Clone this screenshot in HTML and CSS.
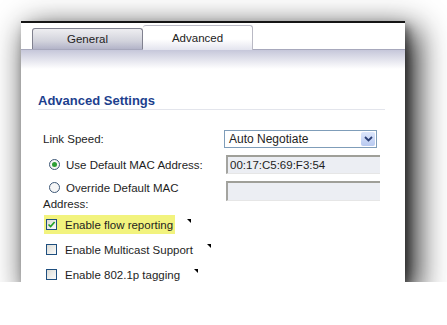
FILE: index.html
```html
<!DOCTYPE html>
<html lang="en">

<head>
    <meta charset="UTF-8">
    <title>Advanced Settings</title>
    <link rel="stylesheet" href="styles.css">
</head>

<body>
    <div class="panel">
        <div class="tabs">
            <div class="tab">General</div>
            <div class="tab active">Advanced</div>
        </div>
        <div class="band"></div>

        <div class="content">
            <h2 class="section-title">Advanced Settings</h2>

            <div class="form-row">
                <div class="cell-label">Link Speed:</div>
                <div class="select">
                    <span>Auto Negotiate</span>
                    <span class="select-btn">
                        <svg width="9" height="6" viewBox="0 0 9 6"><path d="M1 1 L4.5 4.5 L8 1" fill="none" stroke="#2b3f75" stroke-width="1.8"/></svg>
                    </span>
                </div>
            </div>

            <div class="form-row">
                <div class="cell-label"><span class="radio checked"></span>Use Default MAC Address:</div>
                <div class="field">00:17:C5:69:F3:54</div>
            </div>

            <div class="form-row tall">
                <div class="cell-label"><span class="radio"></span>Override Default MAC<br>Address:</div>
                <div class="field"></div>
            </div>

            <div class="check-list">
                <div class="check-row">
                    <span class="check-label highlight">
                        <span class="checkbox">
                            <svg width="9" height="9" viewBox="0 0 9 9"><path d="M1.5 4.5 L3.6 6.6 L7.6 2" fill="none" stroke="#21a121" stroke-width="1.6"/></svg>
                        </span>Enable flow reporting</span>
                    <span class="tip-mark"></span>
                </div>
                <div class="check-row">
                    <span class="check-label"><span class="checkbox"></span>Enable Multicast Support</span>
                    <span class="tip-mark"></span>
                </div>
                <div class="check-row">
                    <span class="check-label"><span class="checkbox"></span>Enable 802.1p tagging</span>
                    <span class="tip-mark"></span>
                </div>
            </div>
        </div>
    </div>
</body>

</html>
```

FILE: styles.css
```css
body {
    margin: 0;
    padding: 0;
    background: #ffffff;
    font-family: 'Liberation Sans', Arial, sans-serif;
    font-size: 11.5px;
    color: #1e1e1e;
}

.panel {
    margin: 21px 0 0 21px;
    width: 384px;
    height: 259px;
    background: #ffffff;
    border-top: 2px solid #151515;
    box-shadow: 4px 5px 8px rgba(0, 0, 0, 0.35), 9px 11px 30px 3px rgba(0, 0, 0, 0.9);
    overflow: hidden;
}

.tabs {
    display: flex;
    align-items: flex-end;
    height: 25px;
    padding-left: 11px;
    border-bottom: 1px solid #a7a8bc;
    margin-top: 1px;
}

.tab {
    width: 109px;
    height: 20px;
    line-height: 21px;
    text-align: center;
    border: 1px solid #80818f;
    border-bottom: 0;
    border-radius: 3px 3px 0 0;
    background: linear-gradient(#eeeef1, #d2d3dc 60%, #b3b4c8);
    color: #222;
}

.tab.active {
    height: 24px;
    line-height: 24px;
    margin-bottom: -1px;
    border-color: #b9b9c4;
    border-left: 0;
    background: linear-gradient(#ffffff 55%, #e3e4ee);
}

.band {
    height: 19px;
    background: linear-gradient(#c6c7da, #ffffff);
}

.content {
    padding: 24px 20px 0 17px;
}

.section-title {
    margin: 0;
    font-size: 13px;
    line-height: 16px;
    font-weight: bold;
    color: #1d3f8e;
    border-bottom: 1px solid #e3e5ec;
}

.form-row {
    display: flex;
    align-items: center;
    height: 19px;
    margin-top: 7px;
}

.form-row:first-of-type {
    margin-top: 19px;
}

.form-row.tall {
    height: 32px;
    align-items: flex-start;
}

.form-row.tall .cell-label {
    line-height: 16px;
    margin-top: -1px;
}

.cell-label {
    width: 183px;
    padding-left: 5px;
    flex-shrink: 0;
}

.radio {
    display: inline-block;
    vertical-align: -1px;
    box-sizing: border-box;
    width: 11px;
    height: 11px;
    margin: 0 6px 0 6px;
    border: 1px solid #3e5877;
    border-radius: 50%;
    background: #f6f6f6;
    position: relative;
}

.radio.checked::after {
    content: '';
    position: absolute;
    left: 2px;
    top: 2px;
    width: 5px;
    height: 5px;
    border-radius: 50%;
    background: #2c9e35;
}

.select {
    display: flex;
    align-items: center;
    justify-content: space-between;
    box-sizing: border-box;
    width: 153px;
    height: 18px;
    margin-left: -2px;
    padding: 0 1px 0 4px;
    border: 1px solid #7f9db9;
    background: #fff;
    font-size: 12px;
}

.select-btn {
    display: flex;
    align-items: center;
    justify-content: center;
    width: 14px;
    height: 14px;
    border-radius: 2px;
    background: linear-gradient(#dce6fb, #b8c9f0);
}

.field {
    box-sizing: border-box;
    width: 154px;
    height: 19px;
    line-height: 16px;
    padding-left: 2px;
    border-style: solid;
    border-width: 2px 0 1px 2px;
    border-color: #9f9f98 #e6e6e6 #e6e6e6 #a4a4a0;
    background: #eceef3;
    font-size: 11.5px;
}

.form-row.tall .field {
    height: 20px;
}

.check-list {
    margin-top: 2px;
}

.check-row {
    display: flex;
    align-items: flex-start;
    height: 19px;
    margin-bottom: 6px;
    padding-left: 6px;
}

.check-label {
    display: inline-flex;
    align-items: center;
    height: 19px;
    padding: 0 2px 0 2px;
}

.highlight {
    background: #f2f37e;
}

.checkbox {
    display: inline-flex;
    align-items: center;
    justify-content: center;
    box-sizing: border-box;
    width: 11px;
    height: 11px;
    margin-right: 8px;
    border: 1px solid #1f4f7f;
    background: linear-gradient(135deg, #dcdcd6, #fbfbfa);
}

.tip-mark {
    width: 0;
    height: 0;
    margin: 4px 0 0 12px;
    border-top: 4px solid #000;
    border-left: 4px solid transparent;
}
```
